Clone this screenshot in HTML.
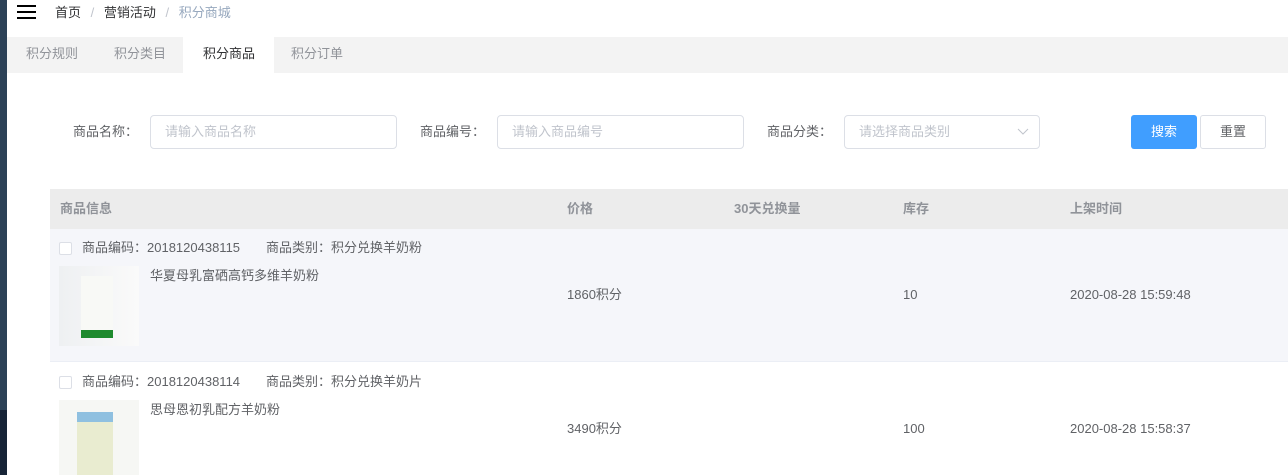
<!DOCTYPE html><html><head><meta charset="utf-8"><style>
*{margin:0;padding:0;box-sizing:border-box}
body{width:1288px;height:475px;overflow:hidden;background:#fff;font-family:"Liberation Sans","Noto Sans CJK SC",sans-serif;font-size:13px;line-height:16px;color:#606266;position:relative}
.a{position:absolute}
.inp{position:absolute;top:115px;height:34px;border:1px solid #dcdfe6;border-radius:4px;background:#fff;color:#c0c4cc;padding-left:14px;line-height:32px}
.lbl{position:absolute;top:124px;color:#606266}
.th{position:absolute;top:201px;font-weight:bold;color:#909399}
.cb{position:absolute;width:13px;height:13px;border:1px solid #dcdfe6;border-radius:2px;background:#fff}
</style></head><body>
<div class="a" style="left:0;top:0;width:7px;height:410px;background:#2c4157"></div>
<div class="a" style="left:0;top:410px;width:7px;height:65px;background:#172437"></div>
<div class="a" style="left:17px;top:5px;width:19px;height:2px;background:#000"></div>
<div class="a" style="left:17px;top:11px;width:19px;height:2px;background:#000"></div>
<div class="a" style="left:17px;top:17px;width:19px;height:2px;background:#000"></div>
<div class="a" style="left:55px;top:5px;color:#303133">首页 <span style="color:#c0c4cc;margin:0 6px">/</span> 营销活动 <span style="color:#c0c4cc;margin:0 6px">/</span> <span style="color:#97a8be">积分商城</span></div>
<div class="a" style="left:7px;top:37px;width:1281px;height:36px;background:#f3f3f3"></div>
<div class="a" style="left:183px;top:37px;width:91px;height:36px;background:#fff"></div>
<div class="a" style="left:26px;top:46px;color:#909399">积分规则</div>
<div class="a" style="left:114px;top:46px;color:#909399">积分类目</div>
<div class="a" style="left:203px;top:46px;color:#303133">积分商品</div>
<div class="a" style="left:291px;top:46px;color:#909399">积分订单</div>
<div class="lbl" style="left:73px">商品名称：</div>
<div class="inp" style="left:150px;width:247px">请输入商品名称</div>
<div class="lbl" style="left:420px">商品编号：</div>
<div class="inp" style="left:497px;width:247px">请输入商品编号</div>
<div class="lbl" style="left:767px">商品分类：</div>
<div class="inp" style="left:844px;width:196px">请选择商品类别<svg class="a" style="right:10px;top:12px" width="12" height="8"><path d="M1 1l5 5 5-5" stroke="#c0c4cc" fill="none"/></svg></div>
<div class="a" style="left:1131px;top:115px;width:66px;height:34px;background:#409eff;border-radius:3px;color:#fff;text-align:center;line-height:34px">搜索</div>
<div class="a" style="left:1200px;top:115px;width:66px;height:34px;border:1px solid #dcdfe6;border-radius:3px;color:#606266;text-align:center;line-height:32px">重置</div>
<div class="a" style="left:50px;top:189px;width:1238px;height:40px;background:#ececec"></div>
<div class="th" style="left:60px">商品信息</div>
<div class="th" style="left:567px">价格</div>
<div class="th" style="left:734px">30天兑换量</div>
<div class="th" style="left:903px">库存</div>
<div class="th" style="left:1070px">上架时间</div>
<div class="a" style="left:50px;top:229px;width:1238px;height:133px;background:#f5f6fa;border-bottom:1px solid #ebeef5"></div>
<div class="cb" style="left:59px;top:242px"></div>
<div class="a" style="left:82px;top:240px">商品编码：2018120438115</div>
<div class="a" style="left:266px;top:240px">商品类别：积分兑换羊奶粉</div>
<div class="a" style="left:59px;top:266px;width:80px;height:80px;background:linear-gradient(90deg,#eef0f2,#fafafa)"><div class="a" style="left:22px;top:10px;width:32px;height:62px;background:#f8f9f6;border-bottom:8px solid #1e8a2e"></div></div>
<div class="a" style="left:150px;top:268px">华夏母乳富硒高钙多维羊奶粉</div>
<div class="a" style="left:567px;top:287px">1860积分</div>
<div class="a" style="left:903px;top:287px">10</div>
<div class="a" style="left:1070px;top:287px">2020-08-28 15:59:48</div>
<div class="cb" style="left:59px;top:376px"></div>
<div class="a" style="left:82px;top:374px">商品编码：2018120438114</div>
<div class="a" style="left:266px;top:374px">商品类别：积分兑换羊奶片</div>
<div class="a" style="left:59px;top:400px;width:80px;height:75px;background:#f6f7f4"><div class="a" style="left:18px;top:12px;width:36px;height:63px;background:#e9ecd0;border-top:10px solid #8fc0e0"></div></div>
<div class="a" style="left:150px;top:402px">思母恩初乳配方羊奶粉</div>
<div class="a" style="left:567px;top:421px">3490积分</div>
<div class="a" style="left:903px;top:421px">100</div>
<div class="a" style="left:1070px;top:421px">2020-08-28 15:58:37</div>
</body></html>
